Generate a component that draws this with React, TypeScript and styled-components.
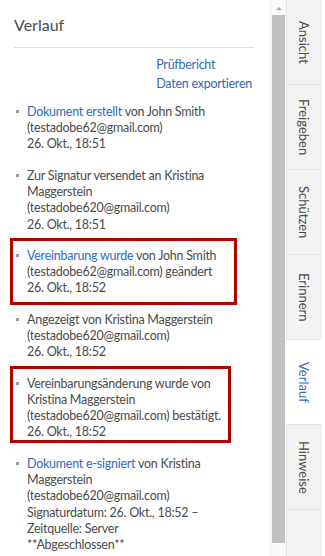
import React from 'react';
import styled, { createGlobalStyle } from 'styled-components';

const GlobalStyle = createGlobalStyle`
  html, body {
    margin: 0;
    padding: 0;
    background: #ffffff;
  }
  body {
    font-family: Lato, "Open Sans", sans-serif;
    color: #4b4b4b;
  }
`;

// Layout
const Frame = styled.div`
  display: flex;
  width: 325px;
  height: 556px;
  overflow: hidden;
  background: #ffffff;
`;

const Panel = styled.section`
  flex: 0 0 270px;
  display: flex;
  flex-direction: column;
  padding: 0 16px 0 14px;
  box-sizing: border-box;
  overflow: hidden;
`;

const Title = styled.h2`
  margin: 15px 0 0;
  font-size: 16px;
  font-weight: 400;
  line-height: 20px;
  color: #4b4b4b;
`;

const Divider = styled.hr`
  margin: 12px 0 0;
  border: none;
  border-top: 1px solid #e1e1e1;
`;

const Actions = styled.div`
  align-self: flex-end;
  display: flex;
  flex-direction: column;
  margin: 7px 2px 0 0;
`;

const ActionLink = styled.a`
  font-size: 12.5px;
  letter-spacing: -0.25px;
  line-height: 19px;
  color: #3568b8;
  text-decoration: none;
`;

const List = styled.ul`
  list-style: none;
  margin: 11px 0 0;
  padding: 0;
  display: flex;
  flex-direction: column;
  gap: 15.3px;
`;

interface BoxProps {
  $box?: { right: number; bottom: number };
}

const Item = styled.li<BoxProps>`
  position: relative;
  padding-left: 13px;
  font-size: 12.5px;
  letter-spacing: -0.25px;
  line-height: 16.2px;
  white-space: nowrap;

  &::before {
    content: '';
    position: absolute;
    left: 2px;
    top: 6px;
    width: 3px;
    height: 3px;
    background: #9a9a9a;
  }

  ${({ $box }) =>
    $box &&
    `
    &::after {
      content: '';
      position: absolute;
      left: -4px;
      top: -10px;
      right: ${$box.right}px;
      bottom: -${$box.bottom}px;
      border: 3px solid #b10000;
      pointer-events: none;
    }
  `}
`;

const Link = styled.a`
  color: #3568b8;
  text-decoration: none;
`;

// Scrollbar
const ScrollTrack = styled.div`
  flex: 0 0 16px;
  display: flex;
  flex-direction: column;
  align-items: center;
  background: #fafafa;
  border-left: 1px solid #f0f0f0;
  box-sizing: border-box;
`;

const ScrollArrow = styled.div`
  width: 0;
  height: 0;
  margin: 7px 0 5px;
  border-left: 3px solid transparent;
  border-right: 3px solid transparent;
  border-bottom: 3px solid #a3a3a3;
`;

const ScrollThumb = styled.div`
  width: 13px;
  height: 528px;
  background: #c1c1c1;
`;

// Side tabs
const Tabs = styled.nav`
  flex: 0 0 36px;
  display: flex;
  flex-direction: column;
  background: #f3f3f3;
  border-left: 1px solid #e4e4e4;
  box-sizing: border-box;
`;

const Tab = styled.div<{ $active?: boolean }>`
  height: 85px;
  flex: 0 0 85px;
  display: flex;
  align-items: center;
  justify-content: center;
  box-sizing: border-box;
  border-bottom: 1px solid #e2e2e2;
  background: ${({ $active }) => ($active ? '#ffffff' : 'transparent')};
  margin-left: ${({ $active }) => ($active ? '-1px' : '0')};
  color: ${({ $active }) => ($active ? '#3568b8' : '#4b4b4b')};
  font-size: 13px;
  writing-mode: vertical-rl;
  padding-right: 1px;
`;

const Gutter = styled.div`
  flex: 0 0 3px;
`;

type Entry = {
  link?: string;
  lines: string[];
  box?: { right: number; bottom: number };
};

const entries: Entry[] = [
  {
    link: 'Dokument erstellt',
    lines: [' von John Smith', '(testadobe62@gmail.com)', '26. Okt., 18:51'],
  },
  {
    lines: [
      'Zur Signatur versendet an Kristina',
      'Maggerstein',
      '(testadobe620@gmail.com)',
      '26. Okt., 18:51',
    ],
  },
  {
    link: 'Vereinbarung wurde',
    lines: [' von John Smith', '(testadobe62@gmail.com) geändert', '26. Okt., 18:52'],
    box: { right: 17, bottom: 8 },
  },
  {
    lines: ['Angezeigt von Kristina Maggerstein', '(testadobe620@gmail.com)', '26. Okt., 18:52'],
  },
  {
    lines: [
      'Vereinbarungsänderung wurde von',
      'Kristina Maggerstein',
      '(testadobe620@gmail.com) bestätigt.',
      '26. Okt., 18:52',
    ],
    box: { right: 23, bottom: 2 },
  },
  {
    link: 'Dokument e-signiert',
    lines: [
      ' von Kristina',
      'Maggerstein',
      '(testadobe620@gmail.com)',
      'Signaturdatum: 26. Okt., 18:52 –',
      'Zeitquelle: Server',
      '**Abgeschlossen**',
    ],
  },
];

const tabs = ['Ansicht', 'Freigeben', 'Schützen', 'Erinnern', 'Verlauf', 'Hinweise'];

const App: React.FC = () => {
  return (
    <>
      <GlobalStyle />
      <Frame>
        <Panel>
          <Title>Verlauf</Title>
          <Divider />
          <Actions>
            <ActionLink href="#">Prüfbericht</ActionLink>
            <ActionLink href="#">Daten exportieren</ActionLink>
          </Actions>
          <List>
            {entries.map((entry, i) => (
              <Item key={i} $box={entry.box}>
                {entry.link && <Link href="#">{entry.link}</Link>}
                {entry.lines.map((line, j) => (
                  <React.Fragment key={j}>
                    {j > 0 && <br />}
                    {line}
                  </React.Fragment>
                ))}
              </Item>
            ))}
          </List>
        </Panel>
        <ScrollTrack>
          <ScrollArrow />
          <ScrollThumb />
        </ScrollTrack>
        <Tabs>
          {tabs.map((t) => (
            <Tab key={t} $active={t === 'Verlauf'}>
              {t}
            </Tab>
          ))}
        </Tabs>
        <Gutter />
      </Frame>
    </>
  );
};

export default App;
